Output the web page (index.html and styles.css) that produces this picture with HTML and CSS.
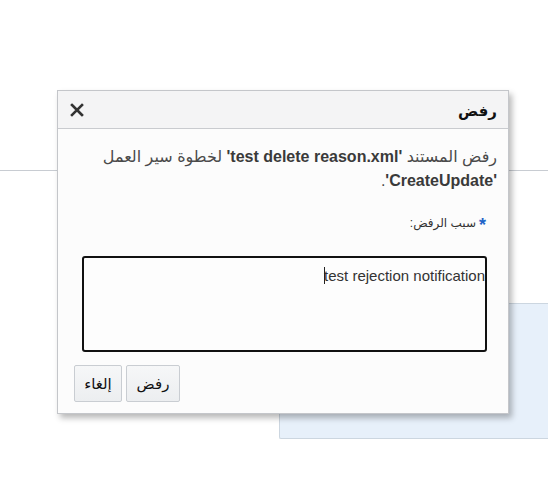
FILE: index.html
```html
<!DOCTYPE html>
<html lang="ar">
<head>
  <meta charset="UTF-8" />
  <title>رفض</title>
  <link rel="stylesheet" href="styles.css">
</head>
<body>
  <!-- page behind the dialog -->
  <div class="page">
    <div class="rule"></div>
    <div class="panel"></div>
  </div>

  <!-- reject dialog -->
  <div class="dialog" dir="rtl">
    <div class="dialog-head">
      <span class="dialog-title">رفض</span>
      <button class="close" title="إغلاق">
        <svg width="14" height="14" viewBox="0 0 14 14">
          <path d="M2 2 L12 12 M12 2 L2 12" stroke="#333" stroke-width="2.6" stroke-linecap="square" />
        </svg>
      </button>
    </div>
    <div class="dialog-body">
      <p class="message">رفض المستند <b dir="ltr">'test delete reason.xml'</b> لخطوة سير العمل <b dir="ltr">'CreateUpdate'</b>.</p>
      <label class="field-label" for="reason"><span class="req">*</span>سبب الرفض:</label>
      <div class="reason-box">
        <span class="caret"></span>
        <textarea id="reason" class="reason">test rejection notification</textarea>
      </div>
    </div>
    <div class="dialog-foot">
      <button class="btn btn-reject">رفض</button>
      <button class="btn btn-cancel">إلغاء</button>
    </div>
  </div>
</body>
</html>
```

FILE: styles.css
```css
body {
  margin: 0;
  padding: 0;
  background: #fff;
  font-family: "Liberation Sans", "DejaVu Sans", sans-serif;
}
.page {
  padding-top: 170px;
}
.rule {
  height: 1px;
  background: #c8ccd2;
}
.panel {
  margin: 132px 0 0 279px;
  height: 134px;
  background: #e7f0fa;
  border: 1px solid #ccd6e0;
  border-right: none;
  border-radius: 2px 0 0 2px;
}
.dialog {
  position: absolute;
  left: 57px;
  top: 90px;
  width: 450px;
  height: 322px;
  background: #fcfcfc;
  border: 1px solid #c4c6ca;
  box-shadow: 3px 4px 6px rgba(0, 0, 0, 0.28);
  display: flex;
  flex-direction: column;
}
.dialog-head {
  height: 37px;
  background: #f4f4f5;
  border-bottom: 1px solid #c9cbcf;
  display: flex;
  align-items: center;
  justify-content: space-between;
  padding: 0 11px 0 12px;
}
.dialog-title {
  font-size: 15px;
  font-weight: bold;
  color: #111;
  margin-top: 2px;
}
.close {
  border: none;
  background: none;
  padding: 0;
  width: 14px;
  height: 14px;
  cursor: pointer;
}
.close svg {
  display: block;
}
.dialog-body {
  padding: 16px 11px 0 20px;
  flex: 1;
}
.message {
  margin: 0;
  font-size: 16px;
  line-height: 24px;
  color: #4a4a4a;
}
.message b {
  color: #3a3a3a;
}
.field-label {
  display: block;
  margin: 22px 11px 0 0;
  font-size: 12px;
  color: #333;
}
.req {
  color: #1f64c8;
  font-size: 18px;
  font-weight: bold;
  margin-left: 3px;
  vertical-align: -4px;
}
.reason-box {
  position: relative;
  width: 405px;
  margin: 20px 10px 0 0;
}
.reason {
  display: block;
  box-sizing: border-box;
  width: 405px;
  height: 96px;
  margin: 0;
  padding: 9px 0 4px 4px;
  border: 2px solid #111;
  border-radius: 3px;
  background: #fdfdfd;
  font-family: "Liberation Sans", sans-serif;
  font-size: 15px;
  color: #333;
  resize: none;
  direction: rtl;
  outline: none;
}
/* text cursor drawn at the start of the typed text */
.caret {
  position: absolute;
  top: 11px;
  left: 242px;
  width: 1px;
  height: 17px;
  background: #222;
  z-index: 1;
}
.dialog-foot {
  display: flex;
  justify-content: flex-end;
  gap: 4px;
  padding: 0 16px 11px;
}
.btn {
  height: 37px;
  padding: 0;
  font-family: "DejaVu Sans", sans-serif;
  font-size: 15px;
  color: #111;
  background: linear-gradient(#f6f7f8, #eceef0);
  border: 1px solid #c9cdd2;
  border-radius: 2px;
  cursor: pointer;
}
.btn-reject {
  width: 54px;
}
.btn-cancel {
  width: 48px;
}
```
